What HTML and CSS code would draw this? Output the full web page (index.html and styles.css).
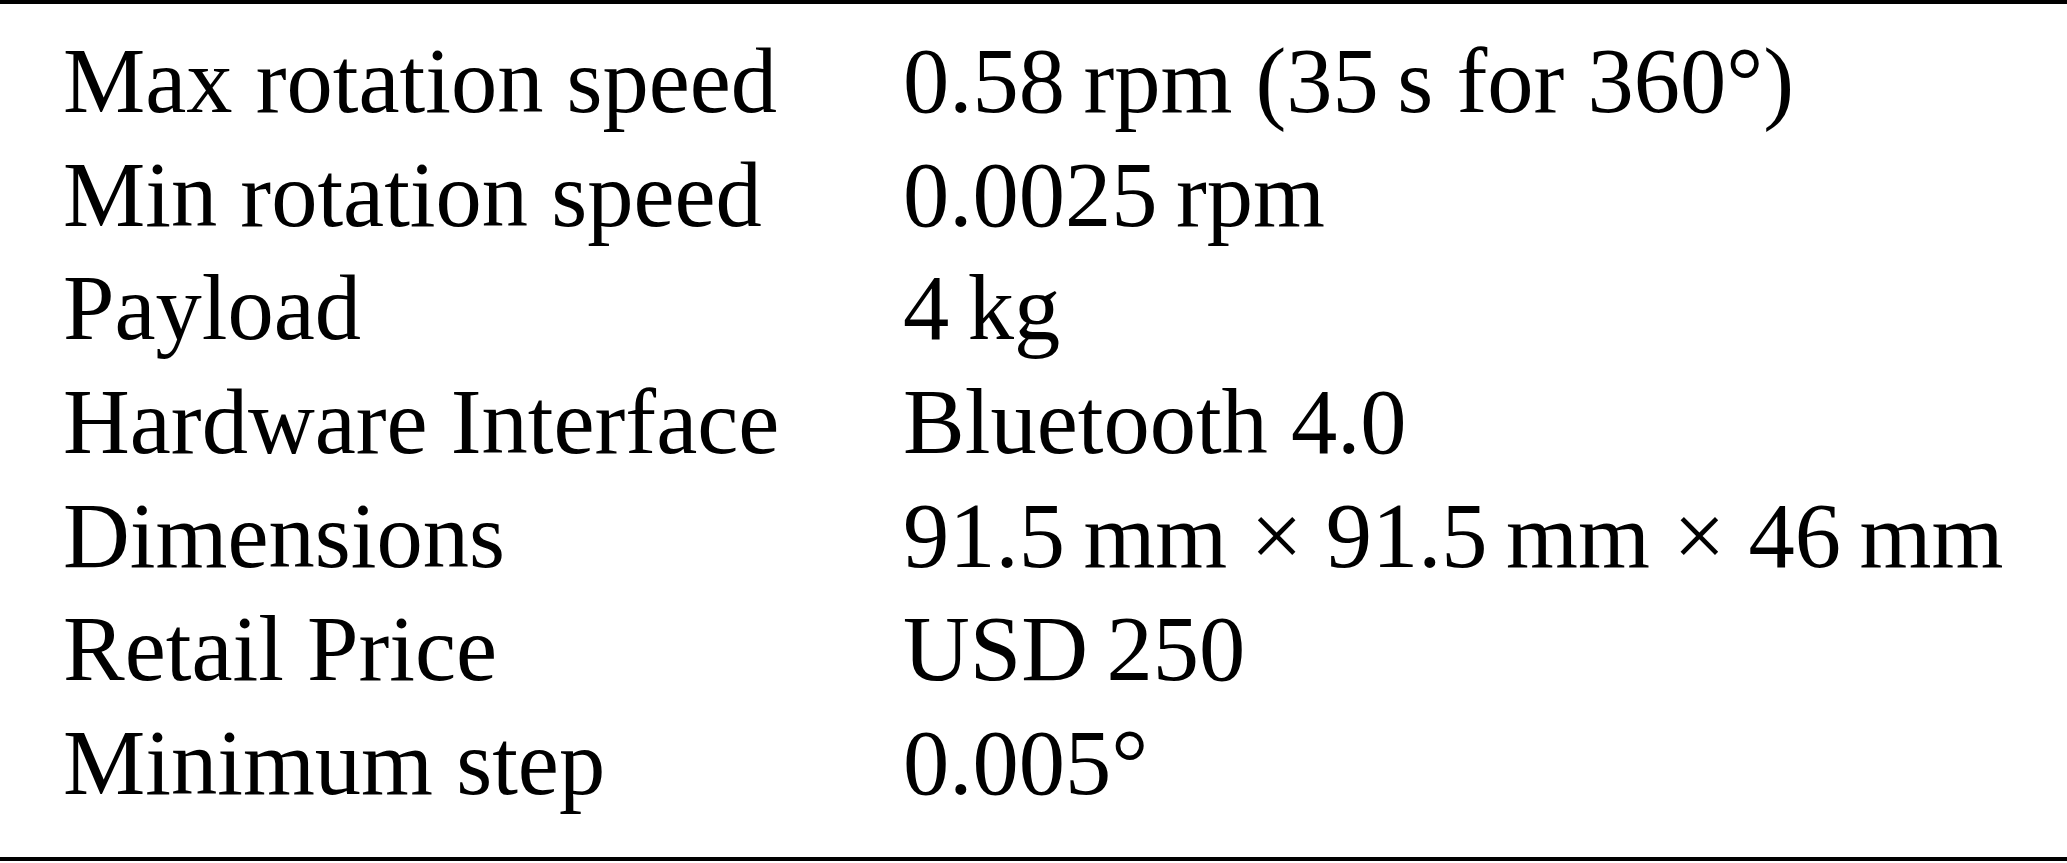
FILE: index.html
```html
<!DOCTYPE html>
<html>
    <head>
        <meta charset="UTF-8">
        <meta name="viewport" content="width=device-width, initial-scale=1.0">
        <title>Specifications</title>
        <link rel="stylesheet" href="styles.css">
    </head>
    <body>
        <div class="spec-content">
            <table class="spec-table">
                <tr>
                    <td class="spec-label">Max rotation speed</td>
                    <td class="spec-value">0.58&thinsp;rpm (35&thinsp;s for 360°)</td>
                </tr>
                <tr>
                    <td class="spec-label">Min rotation speed</td>
                    <td class="spec-value">0.0025&thinsp;rpm</td>
                </tr>
                <tr>
                    <td class="spec-label">Payload</td>
                    <td class="spec-value">4&thinsp;kg</td>
                </tr>
                <tr>
                    <td class="spec-label">Hardware Interface</td>
                    <td class="spec-value">Bluetooth 4.0</td>
                </tr>
                <tr>
                    <td class="spec-label">Dimensions</td>
                    <td class="spec-value">91.5&thinsp;mm × 91.5&thinsp;mm × 46&thinsp;mm</td>
                </tr>
                <tr>
                    <td class="spec-label">Retail Price</td>
                    <td class="spec-value">USD&thinsp;250</td>
                </tr>
                <tr>
                    <td class="spec-label">Minimum step</td>
                    <td class="spec-value">0.005°</td>
                </tr>
            </table>
        </div>
    </body>
</html>
```

FILE: styles.css
```css
body{
    margin: 0;
    background-color: #fff;
    color: #000;
    font-family: 'Liberation Serif', 'Times New Roman', serif;
}
.spec-content{
    width: 100%;
    border-top: 4px solid #000;
    border-bottom: 4px solid #000;
    padding: 21px 0 36px 63px;
    box-sizing: border-box;
}
.spec-table{
    border-collapse: collapse;
    border-spacing: 0;
}
.spec-table td{
    padding: 0;
    font-size: 92.5px;
    line-height: 113.67px;
    white-space: nowrap;
    vertical-align: baseline;
}
.spec-label{
    width: 840px;
}
```
